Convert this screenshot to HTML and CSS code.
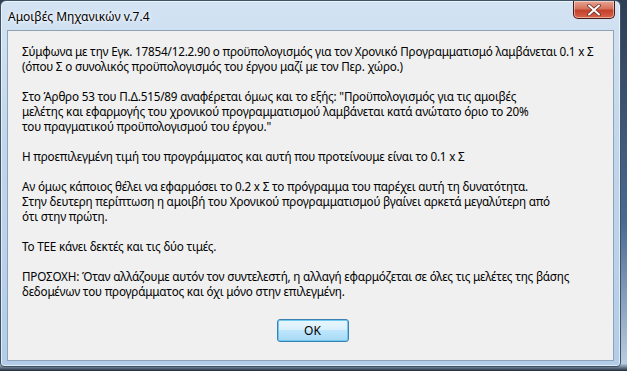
FILE: index.html
```html
<!DOCTYPE html>
<html lang="el">
<head>
    <meta charset="UTF-8">
    <title>Αμοιβές Μηχανικών v.7.4</title>
    <link rel="stylesheet" href="styles.css">
</head>
<body>
    <div class="window">
        <div class="titlebar">
            <span class="title">Αμοιβές Μηχανικών v.7.4</span>
            <button type="button" class="close">
                <svg width="14" height="12" viewBox="0 0 14 12">
                    <path d="M2 1.5 L12 10.5 M12 1.5 L2 10.5" stroke="#6b2a22" stroke-width="3.6" stroke-linecap="round"/>
                    <path d="M2 1.5 L12 10.5 M12 1.5 L2 10.5" stroke="#ffffff" stroke-width="2" stroke-linecap="round"/>
                </svg>
            </button>
        </div>
        <div class="client">
            <div class="message">
                <p>Σύμφωνα με την Εγκ. 17854/12.2.90 ο προϋπολογισμός για τον Χρονικό Προγραμματισμό λαμβάνεται 0.1 x Σ<br>(όπου Σ ο συνολικός προϋπολογισμός του έργου μαζί με τον Περ. χώρο.)</p>
                <p>Στο Άρθρο 53 του Π.Δ.515/89 αναφέρεται όμως και το εξής: "Προϋπολογισμός για τις αμοιβές<br>μελέτης και εφαρμογής του χρονικού προγραμματισμού λαμβάνεται κατά ανώτατο όριο το 20%<br>του πραγματικού προϋπολογισμού του έργου."</p>
                <p>Η προεπιλεγμένη τιμή του προγράμματος και αυτή που προτείνουμε είναι το 0.1 x Σ</p>
                <p>Αν όμως κάποιος θέλει να εφαρμόσει το 0.2 x Σ το πρόγραμμα του παρέχει αυτή τη δυνατότητα.<br>Στην δευτερη περίπτωση η αμοιβή του Χρονικού προγραμματισμού βγαίνει αρκετά μεγαλύτερη από<br>ότι στην πρώτη.</p>
                <p>Το ΤΕΕ κάνει δεκτές και τις δύο τιμές.</p>
                <p>ΠΡΟΣΟΧΗ: Όταν αλλάζουμε αυτόν τον συντελεστή, η αλλαγή εφαρμόζεται σε όλες τις μελέτες της βάσης<br>δεδομένων του προγράμματος και όχι μόνο στην επιλεγμένη.</p>
            </div>
            <div class="buttons">
                <button type="button" class="ok">OK</button>
            </div>
        </div>
    </div>
</body>
</html>
```

FILE: styles.css
```css
body {
    margin: 0;
    width: 627px;
    height: 371px;
    overflow: hidden;
    background: linear-gradient(to bottom, #2e3e55 0, #4a6a92 60%, #b9cde0 98%, #1e2a3c 100%);
    font-family: 'Noto Sans', 'Open Sans', sans-serif;
}

.window {
    width: 607px;
    height: 360px;
    border: 1px solid #3e5266;
    border-radius: 6px 6px 4px 4px;
    background: linear-gradient(to bottom, #d3e3f3 0, #c0d6ec 40%, #b3cde8 100%);
    box-shadow: inset 0 0 0 1px rgba(255, 255, 255, 0.6);
    display: flex;
    flex-direction: column;
    padding: 0 6px 5px 6px;
}

.titlebar {
    height: 29px;
    display: flex;
    align-items: flex-start;
}

.title {
    font-size: 12px;
    color: #000;
    margin-top: 7px;
    margin-left: 1px;
    text-shadow: 0 0 6px #ffffff, 0 0 3px #ffffff;
}

.close {
    margin-left: auto;
    width: 42px;
    height: 18px;
    border: 1px solid #4a1a14;
    border-top: none;
    border-radius: 0 0 5px 5px;
    background: linear-gradient(to bottom, #e8a493 0, #d5725c 45%, #c4412a 55%, #d7644a 100%);
    box-shadow: inset 0 0 0 1px rgba(255, 255, 255, 0.45);
    display: flex;
    align-items: center;
    justify-content: center;
    padding: 0;
    margin-right: -1px;
}

.client {
    flex: 1;
    background-color: #f0f0f0;
    border: 1px solid #8ea3b8;
    display: flex;
    flex-direction: column;
    padding: 13px 10px 0 14px;
}

.message {
    font-size: 11.7px;
    letter-spacing: -0.2px;
    line-height: 15px;
    color: #000;
    white-space: nowrap;
}

.message p {
    margin: 0 0 15px 0;
}

.buttons {
    display: flex;
    justify-content: center;
    margin-top: 5px;
}

.ok {
    width: 72px;
    height: 23px;
    border: 1px solid #3c7fb1;
    border-radius: 3px;
    background: linear-gradient(to bottom, #eaf6fd 0, #d9f0fc 45%, #bee6fd 50%, #a7d9f5 100%);
    box-shadow: inset 0 0 0 1px #6fcaf0;
    font-family: 'Noto Sans', sans-serif;
    font-size: 12px;
    color: #000;
    padding: 0;
}
```
